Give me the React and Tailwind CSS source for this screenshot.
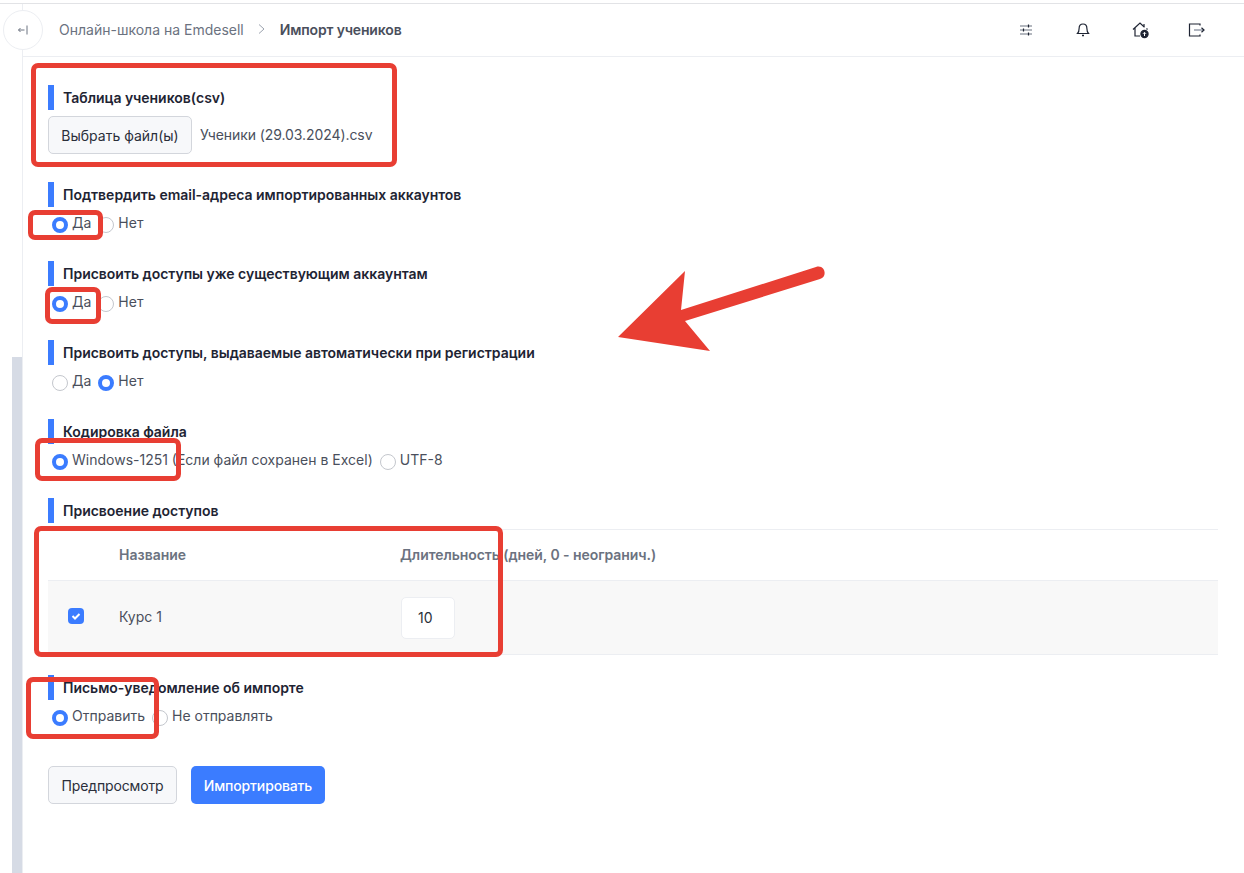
import React from 'react';

const SectionTitle = ({ children }) => (
  <div className="flex items-center h-[25px]">
    <span className="w-[6px] h-[25px] bg-[#3b7cff]" />
    <span className="ml-[9px] text-[14px] font-semibold tracking-[-0.02px] text-[#1e2433]">{children}</span>
  </div>
);

const Radio = ({ label, checked }) => (
  <label className="flex items-center h-[20px]">
    {checked ? (
      <span className="w-[16px] h-[16px] rounded-full border-[4.5px] border-[#3b7cff] bg-white mt-[4px]" />
    ) : (
      <span className="w-[16px] h-[16px] rounded-full border border-[#c4c7cd] bg-white mt-[4px]" />
    )}
    <span className="ml-[4px] mb-[2px] text-[14px] text-[#4a4f5c]">{label}</span>
  </label>
);

const RadioSection = ({ title, options, checked, className = '' }) => (
  <section className={className}>
    <SectionTitle>{title}</SectionTitle>
    <div className="flex items-center gap-[7px] mt-[6px] pl-[4px]">
      {options.map((o, i) => (
        <Radio key={o} label={o} checked={i === checked} />
      ))}
    </div>
  </section>
);

const RedBox = ({ className }) => (
  <div className={`absolute border-[5px] border-[#e83e33] rounded-[7px] pointer-events-none ${className}`} />
);

const HeaderIcons = () => (
  <div className="flex items-center gap-[41px] mr-[38px] -mt-[1px]">
    <svg width="16" height="16" viewBox="0 0 16 16" fill="none" stroke="#6b7280" strokeWidth="1.2">
      <path d="M2 4h12M2 8h12M2 12h12" />
      <path d="M10.5 2.5v3M5.5 6.5v3M10.5 10.5v3" stroke="#1e2433" />
    </svg>
    <svg width="16" height="16" viewBox="0 0 16 16" fill="none" stroke="#1e2433" strokeWidth="1.2">
      <path d="M8 2c-2.6 0-3.9 2-3.9 4.4 0 3-.9 4.3-1.6 5.1h11c-.7-.8-1.6-2.1-1.6-5.1C11.9 4 10.600 2 8 2z" />
      <path d="M7 13.500h2" strokeWidth="1.600" />
    </svg>
    <svg width="18" height="18" viewBox="0 0 18 18" fill="none" stroke="#1e2433" strokeWidth="1.2">
      <path d="M1 8.500 8 2l4.500 4.200M3 7v8h5" />
      <path d="M12 3v2.500M14.500 7.500l1 1" />
      <circle cx="12.500" cy="13" r="3.600" fill="#1e2433" />
      <path d="M12.500 15v-3.500M11 12.800l1.500-1.500 1.500 1.500" stroke="#fff" strokeWidth="1" />
    </svg>
    <svg className="-ml-[3px]" width="18" height="16" viewBox="0 0 18 16" fill="none" strokeWidth="1.2">
      <path d="M12 3.500V2H1.500v12H12v-1.500" stroke="#1e2433" />
      <path d="M6 8h9" stroke="#9ca3af" strokeWidth="1.600" />
      <path d="M13.500 5.800 16 8l-2.500 2.200" stroke="#1e2433" />
    </svg>
  </div>
);

export default function App() {
  return (
    <div className="relative w-[1244px] h-[873px] overflow-hidden bg-white font-['Inter',sans-serif]">
      <div className="pt-[3px] h-full">
        <div className="h-[1px] bg-[#e2e3e6]" />
        <div className="flex h-[869px]">
          <aside className="w-[22px] shrink-0 pl-[12px] pt-[353px]">
            <div className="w-[10px] h-full bg-[#d6dbe5]" />
          </aside>

          <main className="flex-1 border-l border-[#eceef2] min-w-0">
            <header className="flex items-center justify-between h-[53px] border-b border-[#eceef2] pl-[36px]">
              <nav className="flex items-center text-[14px] -mt-[2px]">
                <span className="text-[#6b7280]">Онлайн-школа на Emdesell</span>
                <svg className="ml-[13px] mr-[14px]" width="9" height="12" viewBox="0 0 9 12" fill="none" stroke="#9ca3af" strokeWidth="1">
                  <path d="M2 1.500 7 6l-5 4.500" />
                </svg>
                <span className="font-semibold tracking-[-0.15px] text-[#4a4f5c]">Импорт учеников</span>
              </nav>
              <HeaderIcons />
            </header>

            <div className="pl-[25px] pr-[26px] pt-[28px]">
              <section>
                <SectionTitle>Таблица учеников(csv)</SectionTitle>
                <div className="flex items-center mt-[6px]">
                  <button className="w-[144px] h-[38px] rounded-[5px] border border-[#d3d6dc] bg-[#f7f8fa] text-[14px] text-[#2b2f3a]">
                    Выбрать файл(ы)
                  </button>
                  <span className="ml-[8px] text-[14px] tracking-[-0.08px] text-[#4a4f5c] -mt-[2px]">Ученики (29.03.2024).csv</span>
                </div>
              </section>

              <RadioSection className="mt-[28px]" title="Подтвердить email-адреса импортированных аккаунтов" options={['Да', 'Нет']} checked={0} />
              <RadioSection className="mt-[28px]" title="Присвоить доступы уже существующим аккаунтам" options={['Да', 'Нет']} checked={0} />
              <RadioSection className="mt-[28px]" title="Присвоить доступы, выдаваемые автоматически при регистрации" options={['Да', 'Нет']} checked={1} />
              <RadioSection className="mt-[28px]" title="Кодировка файла" options={['Windows-1251 (Если файл сохранен в Excel)', 'UTF-8']} checked={0} />

              <section className="mt-[28px]">
                <SectionTitle>Присвоение доступов</SectionTitle>
                <div className="mt-[6px] border-t border-b border-[#eceef2] text-[14px]">
                  <div className="flex items-center h-[51px] pb-[2px] border-b border-[#eceef2] font-semibold text-[#6b7280]">
                    <span className="w-[71px] shrink-0" />
                    <span className="w-[282px] shrink-0">Название</span>
                    <span className="-ml-[1px] tracking-[-0.06px]">Длительность (дней, 0 - неогранич.)</span>
                  </div>
                  <div className="flex items-center h-[73px] bg-[#f8f8f8]">
                    <span className="w-[71px] shrink-0 pl-[20px]">
                      <span className="flex items-center justify-center w-[16px] h-[16px] rounded-[4px] bg-[#3b7cff] -mt-[4px]">
                        <svg width="10" height="10" viewBox="0 0 10 10" fill="none" stroke="#fff" strokeWidth="2">
                          <path d="m1.500 5 2.500 2.500 4.500-4.500" />
                        </svg>
                      </span>
                    </span>
                    <span className="w-[282px] shrink-0 -mt-[2px] text-[#4a4f5c]">Курс 1</span>
                    <span className="flex items-center w-[54px] h-[42px] pl-[16px] rounded-[5px] border border-[#eceef2] bg-white text-[#2b2f3a]">10</span>
                  </div>
                </div>
              </section>

              <RadioSection className="mt-[20px]" title="Письмо-уведомление об импорте" options={['Отправить', 'Не отправлять']} checked={0} />

              <div className="flex gap-[14px] mt-[40px]">
                <button className="w-[129px] h-[38px] rounded-[5px] border border-[#d3d6dc] bg-[#f7f8fa] text-[14px] tracking-[-0.15px] text-[#2b2f3a]">
                  Предпросмотр
                </button>
                <button className="w-[134px] h-[38px] rounded-[5px] bg-[#3b7cff] text-[14px] font-medium tracking-[-0.15px] text-white">
                  Импортировать
                </button>
              </div>
            </div>
          </main>
        </div>
      </div>

      {/* back button sits over the sidebar edge */}
      <button className="absolute left-[3px] top-[10px] w-[40px] h-[40px] rounded-full border border-[#eceef2] bg-white flex items-center justify-center">
        <svg width="12" height="12" viewBox="0 0 12 12" fill="none" stroke="#6b7280" strokeWidth="1">
          <path d="M7.500 6H1.500M3.500 4 1.500 6l2 2M10 1.500v9" />
        </svg>
      </button>

      {/* red annotations */}
      <RedBox className="left-[31px] top-[63px] w-[366px] h-[104px]" />
      <RedBox className="left-[28px] top-[210px] w-[75px] h-[30px]" />
      <RedBox className="left-[45px] top-[287px] w-[56px] h-[37px]" />
      <RedBox className="left-[35px] top-[438px] w-[146px] h-[43px]" />
      <RedBox className="left-[34px] top-[526px] w-[469px] h-[131px]" />
      <RedBox className="left-[26px] top-[677px] w-[133px] h-[62px]" />
      <svg className="absolute left-0 top-0 pointer-events-none" width="1244" height="873" fill="none">
        <path d="M618 337 685 271 681 310 816 267C825 264 828 277 820 279L685 321 710 351Z" fill="#e83e33" />
      </svg>
    </div>
  );
}
